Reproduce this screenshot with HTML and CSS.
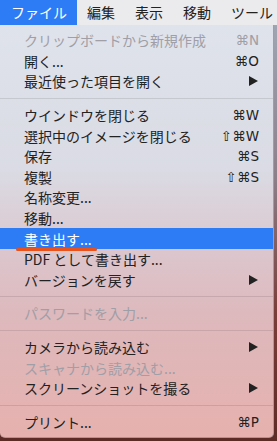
FILE: index.html
```html
<!DOCTYPE html>
<html lang="ja">
<head>
  <meta charset="UTF-8">
  <meta name="viewport" content="width=device-width, initial-scale=1.0">
  <title>ファイル メニュー</title>
  <link rel="stylesheet" href="styles.css">
</head>
<body>
  <div class="menubar">
    <div class="menubar-item active">ファイル</div>
    <div class="menubar-item">編集</div>
    <div class="menubar-item">表示</div>
    <div class="menubar-item">移動</div>
    <div class="menubar-item">ツール</div>
  </div>

  <div class="menu">
    <div class="item disabled"><span>クリップボードから新規作成</span><span class="key">⌘N</span></div>
    <div class="item"><span>開く...</span><span class="key">⌘O</span></div>
    <div class="item"><span>最近使った項目を開く</span><span class="arrow"></span></div>
    <div class="sep"></div>
    <div class="item"><span>ウインドウを閉じる</span><span class="key">⌘W</span></div>
    <div class="item"><span>選択中のイメージを閉じる</span><span class="key">⇧⌘W</span></div>
    <div class="item"><span>保存</span><span class="key">⌘S</span></div>
    <div class="item"><span>複製</span><span class="key">⇧⌘S</span></div>
    <div class="item"><span>名称変更...</span></div>
    <div class="item"><span>移動...</span></div>
    <div class="item selected"><span class="marked">書き出す...</span></div>
    <div class="item"><span>PDF として書き出す...</span></div>
    <div class="item"><span>バージョンを戻す</span><span class="arrow"></span></div>
    <div class="sep"></div>
    <div class="item disabled"><span>パスワードを入力...</span></div>
    <div class="sep"></div>
    <div class="item"><span>カメラから読み込む</span><span class="arrow"></span></div>
    <div class="item disabled"><span>スキャナから読み込む...</span></div>
    <div class="item"><span>スクリーンショットを撮る</span><span class="arrow"></span></div>
    <div class="sep"></div>
    <div class="item"><span>プリント...</span><span class="key">⌘P</span></div>
  </div>
</body>
</html>
```

FILE: styles.css
```css
html, body {
  margin: 0;
  height: 100%;
}
body {
  font-family: "Noto Sans CJK JP", "Noto Sans", sans-serif;
  font-size: 14px;
  color: #222;
  background: linear-gradient(to bottom, #a3abb9 0%, #8d7f8a 40%, #7a3f3b 70%, #5e2a26 100%);
  overflow: hidden;
}
.menubar {
  display: flex;
  height: 25px;
  background-color: #ebebee;
  line-height: 25px;
}
.menubar-item {
  padding: 0 10px;
  white-space: nowrap;
}
.menubar-item:first-child {
  padding-left: 11px;
}
.menubar-item.active {
  background-color: #2d7cf6;
  color: #fff;
}
.menu {
  width: 273px;
  padding: 5px 0 5px;
  border-right: 1px solid #9aa0aa;
  border-bottom: 1px solid #b78f8e;
  border-radius: 0 0 5px 5px;
  background: linear-gradient(to bottom, #dfe3eb 0%, #dadbe4 35%, #dcc6cd 55%, #ddb9bd 70%, #e6b1ae 100%);
}
.item {
  display: flex;
  justify-content: space-between;
  align-items: center;
  height: 20.6px;
  padding: 0 14px 0 24px;
  white-space: nowrap;
  line-height: 20px;
}
.item.disabled {
  color: #a09ea6;
}
.item.selected {
  background-color: #2d7cf6;
  color: #fff;
  position: relative;
}
.marked::after {
  content: "";
  position: absolute;
  left: 16px;
  width: 81px;
  top: 20px;
  height: 3px;
  border-radius: 2px;
  background-color: #e8521c;
}
.key {
  font-family: "DejaVu Sans", sans-serif;
  font-size: 13.5px;
}
.arrow {
  width: 0;
  height: 0;
  margin-right: 1px;
  border-top: 5px solid transparent;
  border-bottom: 5px solid transparent;
  border-left: 9px solid #222;
}
.sep {
  height: 1px;
  margin: 6px 0;
  background-color: rgba(0, 0, 0, 0.1);
}
```
